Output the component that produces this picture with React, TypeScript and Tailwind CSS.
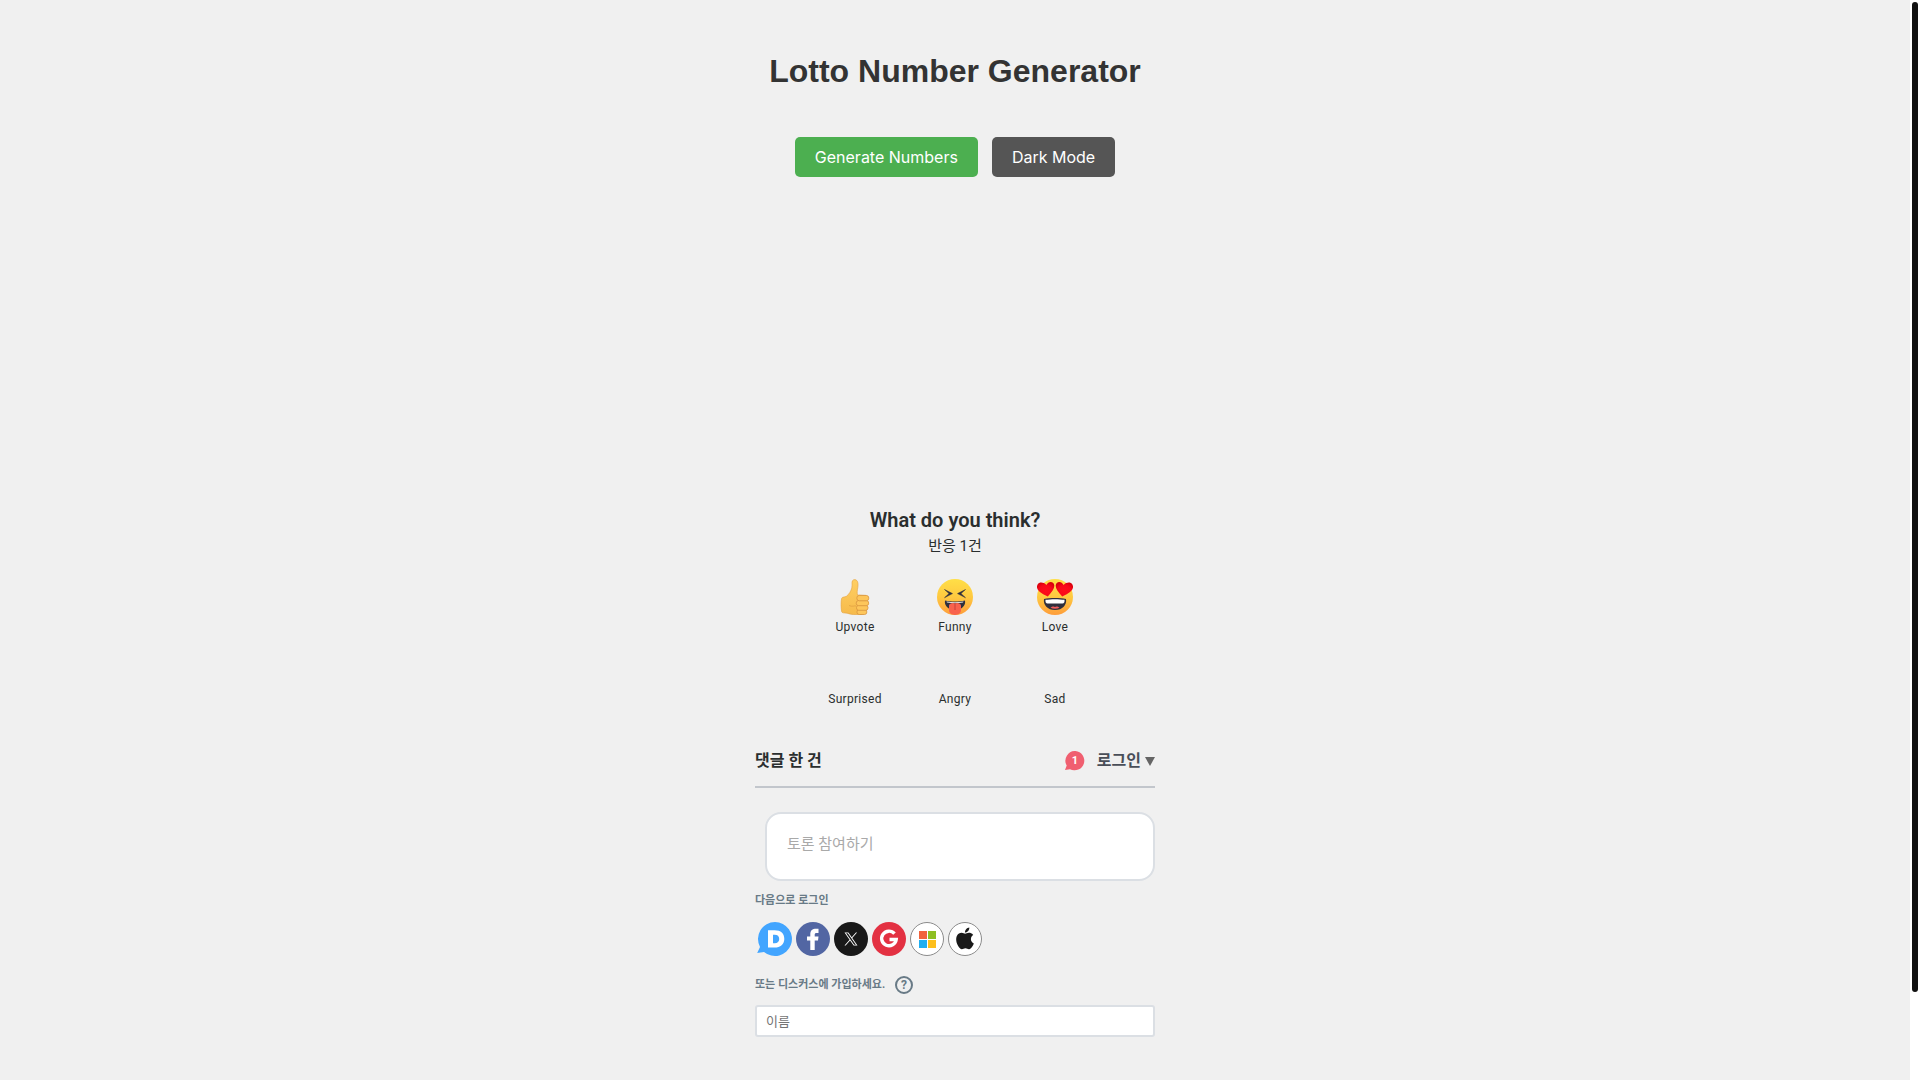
import { useState } from 'react';

const reactions = [
  { label: 'Upvote', Icon: ThumbIcon },
  { label: 'Funny', Icon: FunnyIcon },
  { label: 'Love', Icon: LoveIcon },
  { label: 'Surprised', Icon: null },
  { label: 'Angry', Icon: null },
  { label: 'Sad', Icon: null },
];

const providers = [
  { name: 'Disqus', Icon: DisqusIcon },
  { name: 'Facebook', Icon: FacebookIcon },
  { name: 'X', Icon: XIcon },
  { name: 'Google', Icon: GoogleIcon },
  { name: 'Microsoft', Icon: MicrosoftIcon },
  { name: 'Apple', Icon: AppleIcon },
];

function ThumbIcon() {
  return (
    <svg viewBox="0 0 36 36" className="size-9" aria-hidden="true">
      <defs>
        <linearGradient id="thumb" x1="0" y1="0" x2="0" y2="1">
          <stop offset="0" stopColor="#ffcf62" />
          <stop offset="1" stopColor="#f6ba4b" />
        </linearGradient>
      </defs>
      <path
        d="M15 3.5C15 .8 17.5 0 19.3 1.100C21.200 2.300 21.300 5.500 20.800 8.500C20.400 11 19.800 13.500 20.500 16L29 16.500V34L23.500 35.800C19 36 13.500 35.500 10 34.200C7 33.800 5 34.200 4.600 32.500C4 29 3.800 22 4.700 19.200C5.200 17.800 7.500 18.400 9.400 17.300C12 15.500 14.200 11.500 14.800 9C15.200 7 15 5.200 15 3.500Z"
        fill="url(#thumb)"
        stroke="#e2a142"
        strokeWidth="0.6"
      />
      <g fill="#fdc65b" stroke="#d89540" strokeWidth="0.8">
        <rect x="20" y="30.500" width="9.800" height="5" rx="2.300" />
        <rect x="19.500" y="26.300" width="11.500" height="5" rx="2.300" />
        <rect x="19.200" y="21.500" width="12.500" height="5.200" rx="2.500" />
        <rect x="19.800" y="16.400" width="12" height="5.400" rx="2.600" />
      </g>
      <path d="M12 26.500C15 28 17.500 26.500 19 27" fill="none" stroke="#e2a142" strokeWidth="0.8" />
    </svg>
  );
}

function FunnyIcon() {
  return (
    <svg viewBox="0 0 36 36" className="size-9" aria-hidden="true">
      <defs>
        <linearGradient id="face" x1="0" y1="0" x2="0" y2="1">
          <stop offset="0" stopColor="#ffdf47" />
          <stop offset="0.5" stopColor="#ffc940" />
          <stop offset="1" stopColor="#fe9d3b" />
        </linearGradient>
      </defs>
      <circle cx="18" cy="18" r="18" fill="url(#face)" />
      <path
        d="M7.500 10.500L15.500 14.600L7.500 18.700L12 14.600Z M28.500 10.500L20.500 14.600L28.500 18.700L24 14.600Z"
        fill="#302f3d"
        stroke="#302f3d"
        strokeWidth="0.5"
        strokeLinejoin="round"
      />
      <path d="M8 21.500C14 22.800 22 22.800 28 21.500C29 26 25 31 18 31C11 31 7 26 8 21.500Z" fill="#302f3d" />
      <path d="M9.500 22.600Q18 24 26.500 22.600L26 23.600Q18 25 10 23.600Z" fill="#e6e7e7" />
      <path d="M12 26.500C12 24.200 16.500 23.300 18 24.600C19.500 23.300 24 24.200 24 26.500V31C24 37.500 12 37.500 12 31Z" fill="#f8624d" />
      <path d="M18 25V31" stroke="#c8403b" strokeWidth="1" />
    </svg>
  );
}

function LoveIcon() {
  return (
    <svg viewBox="0 0 36 36" className="size-9" aria-hidden="true">
      <defs>
        <radialGradient id="heart" cx="50%" cy="60%" r="60%">
          <stop offset="0" stopColor="#ff0d1a" />
          <stop offset="0.6" stopColor="#f80a19" />
          <stop offset="1" stopColor="#d9000c" />
        </radialGradient>
      </defs>
      <circle cx="18" cy="18" r="18" fill="url(#face)" />
      <path
        d="M16.500 4.200C14.300 2 11 2.800 9.400 5.900C6.500 3.200 2.500 2.700.6 5.500C-1.500 9.500 1.500 13.500 10.800 17.400C16.500 11.500 18.600 7 16.500 4.200Z"
        fill="url(#heart)"
      />
      <path
        d="M19.500 4.200C21.700 2 25 2.800 26.600 5.900C29.500 3.200 33.500 2.700 35.400 5.500C37.500 9.500 34.500 13.500 25.200 17.400C19.500 11.500 17.400 7 19.500 4.200Z"
        fill="url(#heart)"
      />
      <path d="M7 20C13 18.700 23 18.700 29 20C30 26 25.500 31 18 31C10.500 31 6 26 7 20Z" fill="#302f3d" />
      <path d="M8.500 20.800C14 19.900 22 19.900 27.500 20.800C27.800 23.500 27 24.500 25.500 24.500H10.500C9 24.500 8.200 23.500 8.500 20.800Z" fill="white" />
      <path d="M13.500 28.800C15 27.300 17 27.200 18 28C19 27.200 21 27.300 22.500 28.800C20 30.200 16 30.200 13.500 28.800Z" fill="#f25c5c" />
    </svg>
  );
}

function DisqusIcon() {
  return (
    <svg viewBox="0 0 36 36" className="size-9" aria-hidden="true">
      <path d="M19 1A17 17 0 1 1 8 31L1.200 32L4 26A17 17 0 0 1 19 1Z" fill="#42a5ff" />
      <path d="M12 9.300H18.500C25 9.300 28.300 12.700 28.300 17.900C28.300 23 24.500 26.600 18.500 26.600H12ZM17 13.800V22.200H18.700C21.600 22.200 23.200 20.700 23.200 18C23.200 15.300 21.600 13.800 18.700 13.800Z" fill="white" fillRule="evenodd" />
    </svg>
  );
}

function FacebookIcon() {
  return (
    <svg viewBox="0 0 36 36" className="size-9" aria-hidden="true">
      <circle cx="19" cy="18" r="17" fill="#5266a3" />
      <path d="M16.300 29V19.500H13V15.500H16.300V13.300C16.300 9.500 18.500 7.800 22 7.800H24.500V12H22.600C21.200 12 20.700 12.500 20.700 13.800V15.500H24.500L24 19.500H20.700V29Z" fill="white" />
    </svg>
  );
}

function XIcon() {
  return (
    <svg viewBox="0 0 36 36" className="size-9" aria-hidden="true">
      <circle cx="19" cy="18" r="17" fill="#191919" />
      <g transform="translate(12.500 11.500)" fill="white">
        <path d="M7.740 5.500L12.580 0H11.430L7.230 4.780L3.870 0H0L5.070 7.230L0 13H1.150L5.580 7.950L9.130 13H13L7.740 5.500ZM6.170 7.290L5.660 6.570L1.560.840H3.320L6.620 5.460L7.130 6.180L11.430 12.190H9.670L6.170 7.290Z" />
      </g>
    </svg>
  );
}

function GoogleIcon() {
  return (
    <svg viewBox="0 0 36 36" className="size-9" aria-hidden="true">
      <circle cx="19" cy="18" r="17" fill="#e33142" />
      <path d="M24.500 12.700A7.300 7.300 0 1 0 26.200 18.500H19.500" fill="none" stroke="white" strokeWidth="3.400" />
    </svg>
  );
}

function MicrosoftIcon() {
  return (
    <svg viewBox="0 0 36 36" className="size-9" aria-hidden="true">
      <circle cx="19" cy="18" r="16.500" fill="white" stroke="#8b8b8b" />
      <rect x="11" y="10" width="8" height="8" fill="#f1633c" />
      <rect x="20" y="10" width="8" height="8" fill="#8ebf23" />
      <rect x="11" y="19" width="8" height="8" fill="#20aef0" />
      <rect x="20" y="19" width="8" height="8" fill="#fdbf1c" />
    </svg>
  );
}

function AppleIcon() {
  return (
    <svg viewBox="0 0 36 36" className="size-9" aria-hidden="true">
      <circle cx="19" cy="18" r="16.500" fill="white" stroke="#8b8b8b" />
      <g transform="translate(8.200 6.600) scale(.9)">
        <path
          d="M12.152 6.896c-.948 0-2.415-1.078-3.960-1.040-2.040.027-3.910 1.183-4.961 3.014-2.117 3.675-.546 9.103 1.519 12.090 1.013 1.454 2.208 3.090 3.792 3.039 1.520-.065 2.090-.987 3.935-.987 1.831 0 2.350.987 3.960.948 1.637-.026 2.676-1.480 3.676-2.948 1.156-1.688 1.636-3.325 1.662-3.415-.039-.013-3.182-1.221-3.220-4.857-.026-3.040 2.480-4.494 2.597-4.559-1.429-2.090-3.623-2.324-4.390-2.376-2-.156-3.675 1.090-4.610 1.090zM15.530 3.830c.843-1.012 1.400-2.427 1.245-3.830-1.207.052-2.662.805-3.532 1.818-.780.896-1.454 2.338-1.273 3.714 1.338.104 2.715-.688 3.559-1.701"
          fill="#191919"
        />
      </g>
    </svg>
  );
}

function Comments() {
  return (
    <section className="w-full max-w-[400px] font-[Roboto,'Noto_Sans_CJK_KR',sans-serif]">
      <div className="text-center text-[#2a2e2e]">
        <h2 className="text-xl leading-6 font-semibold">What do you think?</h2>
        <p className="mt-0.5 text-[15px] leading-6">반응 1건</p>
      </div>

      <div className="mx-auto mt-4 grid w-[300px] max-w-full grid-cols-3">
        {reactions.map(({ label, Icon }) => (
          <button key={label} className="flex h-[72px] flex-col items-center pt-[5px] text-xs leading-4 tracking-wide text-[#2a2e2e]">
            <span className="mb-1 block size-9">{Icon && <Icon />}</span>
            {label}
          </button>
        ))}
      </div>

      <header className="mt-5 flex h-[50px] items-center justify-between border-b-2 border-[#c2c6cc] pb-0.5">
        <h3 className="text-base font-bold text-[#2a2e2e]">댓글 한 건</h3>
        <div className="flex items-center gap-3">
          <button className="relative size-5" aria-label="알림 1">
            <svg viewBox="0 0 20 20" className="size-5" aria-hidden="true">
              <path d="M10.500 0A9.700 9.700 0 1 1 5 18.200L0 19L1.700 14.500A9.700 9.700 0 0 1 10.500 0Z" fill="#f05f70" />
            </svg>
            <span className="absolute inset-0 text-center text-[11px] leading-5 font-bold text-white">1</span>
          </button>
          <button className="flex items-center gap-1 text-base font-bold text-[#494e58]">
            로그인
            <svg viewBox="0 0 10 9" className="h-[9px] w-2.5" aria-hidden="true">
              <path d="M0 0H10L5 9Z" fill="#656565" />
            </svg>
          </button>
        </div>
      </header>

      <form onSubmit={(e) => e.preventDefault()}>
        <div className="mt-6 pl-2.5">
          <textarea
            aria-label="토론 참여하기"
            placeholder="토론 참여하기"
            className="block h-[69px] w-full resize-none overflow-hidden rounded-2xl border-2 border-[#dbdfe4] bg-white px-5 py-[18px] text-[15px] leading-6 placeholder:text-[#a9a9a9]"
          />
        </div>

        <h4 className="mt-3 text-[11px] leading-4 font-bold text-[#687a86]">다음으로 로그인</h4>
        <ul className="mt-3 flex gap-0.5 pl-px">
          {providers.map(({ name, Icon }) => (
            <li key={name}>
              <button type="button" className="block" aria-label={name}>
                <Icon />
              </button>
            </li>
          ))}
        </ul>

        <div className="mt-[18px] flex items-center gap-2.5 text-[11px] leading-5 font-bold text-[#687a86]">
          <label htmlFor="name">또는 디스커스에 가입하세요.</label>
          <button type="button" className="flex size-[18px] items-center justify-center rounded-full border-2 border-[#687a86] text-xs leading-none font-bold" aria-label="도움말">
            ?
          </button>
        </div>
        <input
          id="name"
          type="text"
          placeholder="이름"
          className="mt-2.5 block h-8 w-full rounded-[3px] border-2 border-[#dbdfe4] bg-white px-[9px] text-[13px] placeholder:text-[#757575]"
        />
      </form>
    </section>
  );
}

export default function App() {
  const [dark, setDark] = useState(false);
  const [numbers, setNumbers] = useState<number[]>([]);

  const generate = () => {
    const picked = new Set<number>();
    while (picked.size < 6) {
      picked.add(Math.floor(Math.random() * 45) + 1);
    }
    setNumbers([...picked].sort((a, b) => a - b));
  };

  return (
    <div className="flex h-screen overflow-hidden">
      <main className={`flex flex-1 flex-col items-center overflow-hidden pt-[50px] ${dark ? 'bg-[#333333]' : 'bg-[#f0f0f0]'}`}>
        <h1 className={`font-['Liberation_Sans',Arial,sans-serif] text-[32px] leading-[42px] font-bold ${dark ? 'text-white' : 'text-[#333333]'}`}>
          Lotto Number Generator
        </h1>
        <div className="mt-[45px] flex gap-3.5 font-[Inter,sans-serif] text-base font-normal text-white">
          <button onClick={generate} className="h-10 rounded-[5px] bg-[#4caf50] px-5">
            Generate Numbers
          </button>
          <button onClick={() => setDark(!dark)} className="h-10 rounded-[5px] bg-[#555555] px-5">
            Dark Mode
          </button>
        </div>
        <div className="flex h-[331px] shrink-0 items-center gap-3">
          {numbers.map((n) => (
            <span key={n} className="flex size-12 items-center justify-center rounded-full bg-[#4caf50] font-bold text-white">
              {n}
            </span>
          ))}
        </div>
        <Comments />
      </main>

      {/* Scrollbar */}
      <div className="w-2.5 bg-white p-0.5" aria-hidden="true">
        <div className="h-[92%] w-1.5 rounded-full bg-[#111111]" />
      </div>
    </div>
  );
}
